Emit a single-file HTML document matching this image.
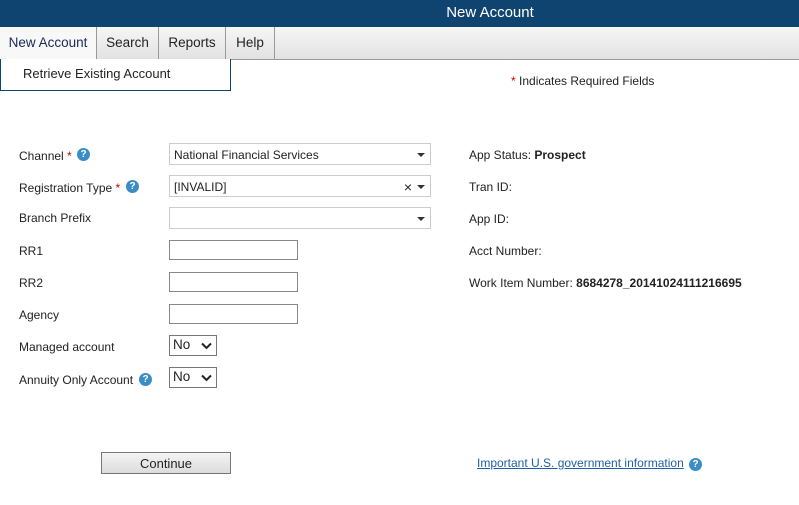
<!DOCTYPE html>
<html><head><style>
*{margin:0;padding:0;box-sizing:border-box}
body{width:799px;height:505px;background:#fff;font-family:"Liberation Sans",Arial,sans-serif;font-size:12px;color:#222;position:relative;overflow:hidden}
.hdr{position:absolute;left:0;top:0;width:799px;height:27px;background:#0f4470;color:#fff;font-size:15px;text-align:center;line-height:26px;padding-left:181px}
.nav{position:absolute;left:0;top:27px;width:799px;height:33px;background:linear-gradient(#f6f6f6,#e2e2e2);border-bottom:1px solid #999}
.tab{position:absolute;top:0;height:32px;line-height:32px;font-size:13.5px;color:#222;text-align:center;border-right:1px solid #999}
.sub{position:absolute;left:0;top:59px;width:231px;height:32px;background:#fff;border:1px solid #0f4470;border-top:none;font-size:13px;padding:7px 0 0 22px}
.t{position:absolute;font-size:12px}
.q{position:absolute;width:13px;height:13px;border-radius:50%;background:#3b8ec5;color:#fff;font-size:10px;font-weight:bold;text-align:center;line-height:13px}
.sel{position:absolute;left:169px;width:262px;height:22px;border:1px solid #ccc;font-size:12px;padding:4px 4px}
.sel:after{content:"";position:absolute;right:5px;top:9px;border:4px solid transparent;border-top:4px solid #333;border-bottom:none}
.inp{position:absolute;left:169px;width:129px;height:20px;border:1px solid #888}
.yn{position:absolute;left:169px;width:48px;height:21px;border:1px solid #777;font-size:13.5px;padding:1px 3px}
.yn svg{position:absolute;right:4px;top:6px}
.st{color:#c00}
</style></head><body>
<div class="hdr">New Account</div>
<div class="nav">
<div class="tab" style="left:0;width:97px;background:#f8f8f8;color:#1a2a55">New Account</div>
<div class="tab" style="left:97px;width:62px">Search</div>
<div class="tab" style="left:159px;width:67px">Reports</div>
<div class="tab" style="left:226px;width:49px">Help</div>
</div>
<div class="sub">Retrieve Existing Account</div>
<div class="t" style="left:511px;top:74px"><span class="st">*</span> Indicates Required Fields</div>

<div class="t" style="left:19px;top:149px">Channel <span class="st">*</span></div><div class="q" style="left:77px;top:148px">?</div>
<div class="sel" style="top:143px">National Financial Services</div>
<div class="t" style="left:19px;top:181px">Registration Type <span class="st">*</span></div><div class="q" style="left:126px;top:180px">?</div>
<div class="sel" style="top:175px">[INVALID]<span style="position:absolute;right:18px;top:3px;font-size:14px">×</span></div>
<div class="t" style="left:19px;top:211px">Branch Prefix</div>
<div class="sel" style="top:207px"></div>
<div class="t" style="left:19px;top:244px">RR1</div><div class="inp" style="top:240px"></div>
<div class="t" style="left:19px;top:276px">RR2</div><div class="inp" style="top:272px"></div>
<div class="t" style="left:19px;top:308px">Agency</div><div class="inp" style="top:304px"></div>
<div class="t" style="left:19px;top:340px">Managed account</div><div class="yn" style="top:335px">No<svg width="11" height="8" viewBox="0 0 11 8"><path d="M1 1.5L5.5 6L10 1.5" fill="none" stroke="#222" stroke-width="2"/></svg></div>
<div class="t" style="left:19px;top:373px">Annuity Only Account</div><div class="q" style="left:139px;top:373px">?</div>
<div class="yn" style="top:367px">No<svg width="11" height="8" viewBox="0 0 11 8"><path d="M1 1.5L5.5 6L10 1.5" fill="none" stroke="#222" stroke-width="2"/></svg></div>

<div class="t" style="left:469px;top:148px">App Status: <b>Prospect</b></div>
<div class="t" style="left:469px;top:180px">Tran ID:</div>
<div class="t" style="left:469px;top:212px">App ID:</div>
<div class="t" style="left:469px;top:244px">Acct Number:</div>
<div class="t" style="left:469px;top:276px">Work Item Number: <b>8684278_20141024111216695</b></div>

<div style="position:absolute;left:101px;top:452px;width:130px;height:22px;border:1px solid #777;background:linear-gradient(#f4f4f4,#dcdcdc);font-size:13px;text-align:center;line-height:21px">Continue</div>
<div class="t" style="left:477px;top:456px;color:#1f5fa8;text-decoration:underline">Important U.S. government information</div>
<div class="q" style="left:689px;top:458px">?</div>
</body></html>
